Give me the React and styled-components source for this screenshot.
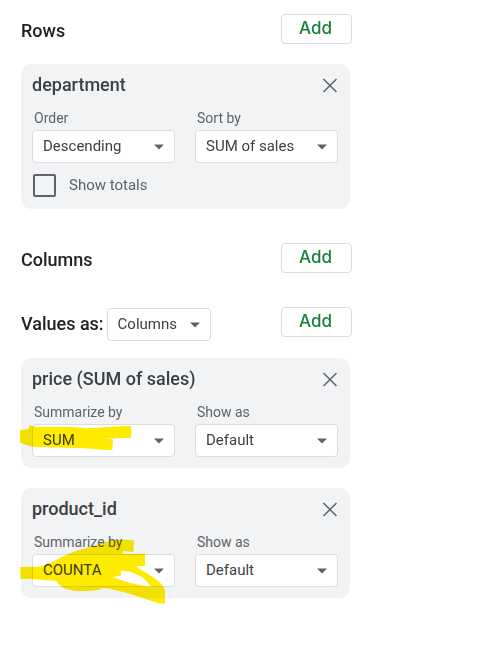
import React, { useId } from "react";
import styled, { createGlobalStyle } from "styled-components";

const GlobalStyle = createGlobalStyle`
  *, *::before, *::after { box-sizing: border-box; }
  body { margin: 0; background: #fff; font-family: Roboto, sans-serif; color: #3c4043; }
  button, select, input { font: inherit; }
`;

const Editor = styled.main`
  max-width: 373px;
  padding: 14px 21px 48px;
`;

const Section = styled.section`
  margin-bottom: ${(p) => p.$gap}px;
`;

const SectionHeader = styled.header`
  display: flex;
  align-items: flex-start;
  height: 30px;
`;

const Heading = styled.h2`
  margin: 0;
  font: 500 18px/33px Roboto, sans-serif;
  color: #202124;
`;

const AddButton = styled.button`
  width: 71px;
  height: 30px;
  margin-left: auto;
  padding: 0 2px 2px 0;
  border: 1px solid #dadce0;
  border-radius: 4px;
  background: #fff;
  font: 500 17px/26px Inter, sans-serif;
  color: #188038;
`;

const Card = styled.article`
  position: relative;
  margin: ${(p) => p.$top}px 2px 0 0;
  padding: 0 12px 11px 11px;
  border-radius: 10px;
  background: #f1f3f4;
`;

const CardHeader = styled.div`
  display: flex;
  align-items: center;
  justify-content: space-between;
  height: 42px;
  margin-bottom: 2px;
`;

const CardTitle = styled.h3`
  margin: 0;
  font: 500 18px/42px Roboto, sans-serif;
`;

const CloseButton = styled.button`
  display: flex;
  padding: 0;
  border: 0;
  background: none;
  color: #5f6368;
`;

const Fields = styled.div`
  display: grid;
  grid-template-columns: 1fr 1fr;
  gap: 20px;
`;

const FieldLabel = styled.label`
  display: block;
  padding: 0 2px 2px;
  font-size: 14px;
  line-height: 20px;
  color: #5f6368;
`;

const SelectBox = styled.div`
  display: grid;
  align-items: center;
  width: ${(p) => p.$width || "100%"};
  margin: ${(p) => p.$margin || 0};

  > * { grid-area: 1 / 1; }
  > svg { justify-self: end; margin-right: 11px; pointer-events: none; }
`;

const NativeSelect = styled.select`
  appearance: none;
  width: 100%;
  height: 33px;
  padding: 0 28px 1px 10px;
  border: 1px solid #dadce0;
  border-radius: 4px;
  background: #fff;
  font-size: 15px;
  color: #3c4043;
`;

const CheckRow = styled.label`
  display: flex;
  align-items: center;
  gap: 13px;
  margin-top: 11px;
  padding: 0 0 1px 1px;
  font-size: 15px;
  line-height: 23px;
  color: #5f6368;
`;

const Checkbox = styled.input`
  appearance: none;
  width: 23px;
  height: 23px;
  margin: 0;
  border: 2px solid #5f6368;
  border-radius: 2px;

  &:checked { background: #188038; }
`;

const Highlight = styled.svg`
  position: absolute;
  top: 0;
  left: 0;
  overflow: visible;
  mix-blend-mode: multiply;
  pointer-events: none;
`;

function Select({ options, width, margin, ...rest }) {
  return (
    <SelectBox $width={width} $margin={margin}>
      <NativeSelect {...rest}>
        {options.map((o) => <option key={o}>{o}</option>)}
      </NativeSelect>
      <svg width="10" height="6" viewBox="0 0 10 6" aria-hidden="true">
        <path d="M0 0.5h10L5 5.5z" fill="#5f6368" />
      </svg>
    </SelectBox>
  );
}

function Field({ label, options }) {
  const id = useId();
  return (
    <div>
      <FieldLabel htmlFor={id}>{label}</FieldLabel>
      <Select id={id} options={options} />
    </div>
  );
}

function PivotCard({ title, top, fields, mark, children }) {
  return (
    <Card $top={top}>
      <CardHeader>
        <CardTitle>{title}</CardTitle>
        <CloseButton type="button" aria-label={`Remove ${title}`}>
          <svg width="16" height="16" viewBox="0 0 16 16" fill="none" stroke="currentColor" strokeWidth="1.5">
            <path d="M1.5 2l13 13M14.5 2l-13 13" />
          </svg>
        </CloseButton>
      </CardHeader>
      <Fields>
        {fields.map((f) => <Field key={f.label} {...f} />)}
      </Fields>
      {children}
      {mark && (
        <Highlight width="180" height="120" viewBox="33 24 540 360" aria-hidden="true">
          <path d={mark} fill="#ffeb00" fillRule="evenodd" />
        </Highlight>
      )}
    </Card>
  );
}

const sumMark =
  "M30 240L57 237V226L75 230H150C200 230 225 235 260 234Q300 229 364 228V263L283 266L309 268L307 300C270 300 230 294 190 294L67 290L30 278Z";
const countMark =
  "M31 261L85 260C125 253 145 230 210 209C250 201 290 180 330 179L372 181L370 216L340 213L338 222L405 221V258L378 259C405 280 455 300 465 330V371L445 370C400 354 340 332 277 323C265 333 230 334 200 333Q150 328 140 303L67 297H31ZM308 291L333 287L332 273C350 270 372 278 390 288Q413 302 422 321Q355 311 308 291Z";

export default function App() {
  return (
    <>
      <GlobalStyle />
      <Editor>
        <Section $gap={34}>
          <SectionHeader>
            <Heading>Rows</Heading>
            <AddButton type="button">Add</AddButton>
          </SectionHeader>
          <PivotCard
            title="department"
            top={20}
            fields={[
              { label: "Order", options: ["Descending", "Ascending"] },
              { label: "Sort by", options: ["SUM of sales", "department"] },
            ]}
          >
            <CheckRow>
              <Checkbox type="checkbox" />
              Show totals
            </CheckRow>
          </PivotCard>
        </Section>
        <Section $gap={34}>
          <SectionHeader>
            <Heading>Columns</Heading>
            <AddButton type="button">Add</AddButton>
          </SectionHeader>
        </Section>
        <Section $gap={0}>
          <SectionHeader>
            <Heading>Values as:</Heading>
            <Select aria-label="Values as" width="104px" margin="1px 0 0 3px" options={["Columns", "Rows"]} />
            <AddButton type="button">Add</AddButton>
          </SectionHeader>
          <PivotCard
            title="price (SUM of sales)"
            top={21}
            mark={sumMark}
            fields={[
              { label: "Summarize by", options: ["SUM", "COUNTA", "AVERAGE"] },
              { label: "Show as", options: ["Default", "% of row"] },
            ]}
          />
          <PivotCard
            title="product_id"
            top={20}
            mark={countMark}
            fields={[
              { label: "Summarize by", options: ["COUNTA", "SUM", "AVERAGE"] },
              { label: "Show as", options: ["Default", "% of row"] },
            ]}
          />
        </Section>
      </Editor>
    </>
  );
}
